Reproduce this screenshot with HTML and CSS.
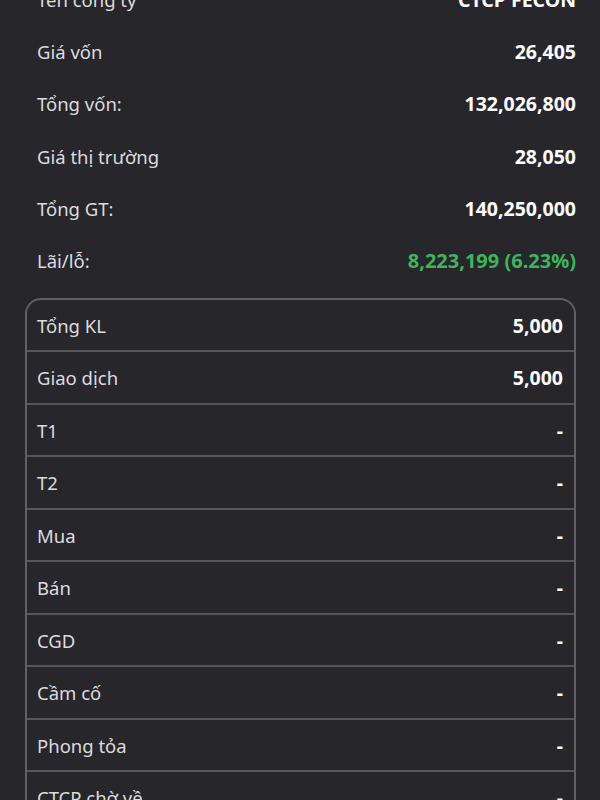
FILE: index.html
```html
<!DOCTYPE html>
<html lang="vi">
<head>
<meta charset="utf-8">
<link rel="stylesheet" href="styles.css">
</head>
<body>
<div class="page">
  <div class="summary">
    <div class="row"><span class="label">Tên công ty</span><span class="value">CTCP FECON</span></div>
    <div class="row"><span class="label">Giá vốn</span><span class="value">26,405</span></div>
    <div class="row"><span class="label">Tổng vốn:</span><span class="value">132,026,800</span></div>
    <div class="row"><span class="label">Giá thị trường</span><span class="value">28,050</span></div>
    <div class="row"><span class="label">Tổng GT:</span><span class="value">140,250,000</span></div>
    <div class="row"><span class="label">Lãi/lỗ:</span><span class="value up">8,223,199 (6.23%)</span></div>
  </div>
  <div class="box">
    <div class="brow"><span class="label">Tổng KL</span><span class="value">5,000</span></div>
    <div class="brow"><span class="label">Giao dịch</span><span class="value">5,000</span></div>
    <div class="brow"><span class="label">T1</span><span class="value">-</span></div>
    <div class="brow"><span class="label">T2</span><span class="value">-</span></div>
    <div class="brow"><span class="label">Mua</span><span class="value">-</span></div>
    <div class="brow"><span class="label">Bán</span><span class="value">-</span></div>
    <div class="brow"><span class="label">CGD</span><span class="value">-</span></div>
    <div class="brow"><span class="label">Cầm cố</span><span class="value">-</span></div>
    <div class="brow"><span class="label">Phong tỏa</span><span class="value">-</span></div>
    <div class="brow"><span class="label">CTCP chờ về</span><span class="value">-</span></div>
  </div>
</div>
</body>
</html>
```
FILE: styles.css
```css
html, body {
  margin: 0;
  padding: 0;
  background: #27262b;
  height: 100%;
  overflow: hidden;
}
body {
  font-family: "Noto Sans", "Open Sans", sans-serif;
  font-size: 18.5px;
  color: #dcdcde;
}
.page {
  margin-top: -27px;
  padding: 0 24px 0 25px;
}
.summary {
  padding-left: 12px;
}
.row {
  display: flex;
  justify-content: space-between;
  align-items: center;
  height: 52.3px;
}
.label {
  font-weight: 400;
  color: #dcdcde;
}
.value {
  font-size: 19.5px;
  font-weight: 700;
  color: #ffffff;
}
.value.up {
  font-size: 20px;
  color: #3db65b;
}
.box {
  margin-top: 11px;
  border: 2px solid #606065;
  border-bottom: none;
  border-radius: 16px 16px 0 0;
}
.brow {
  display: flex;
  justify-content: space-between;
  align-items: center;
  height: 50.5px;
  padding: 0 11px 0 10px;
  border-bottom: 2px solid #55555a;
}
```
